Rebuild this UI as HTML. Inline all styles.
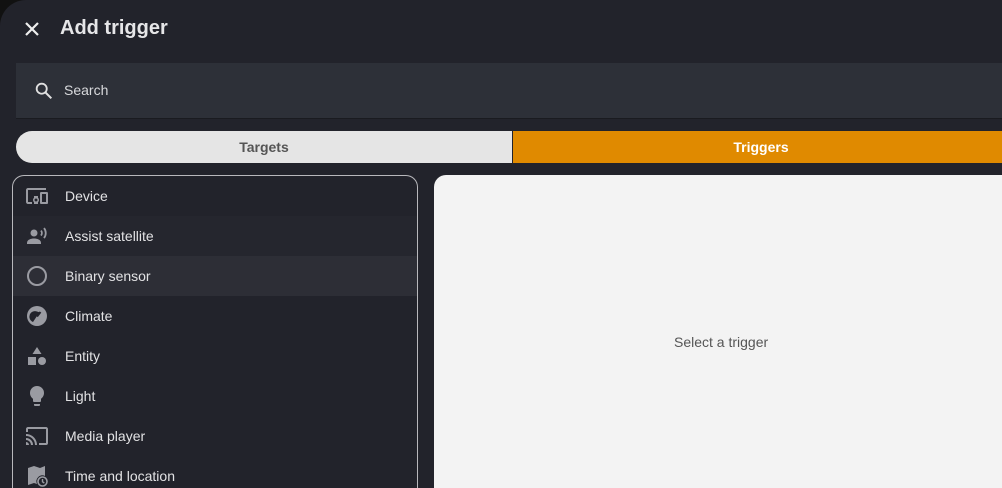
<!DOCTYPE html>
<html><head><style>
*{box-sizing:border-box;margin:0;padding:0}
html,body{width:1002px;height:488px;overflow:hidden;background:#111;font-family:"Liberation Sans",sans-serif}
.dlg{position:absolute;left:0;top:0;width:1002px;height:488px;background:#22232b;border-radius:26px 0 0 0;overflow:hidden}
.x{position:absolute;left:22px;top:19px}
h1{position:absolute;left:60px;top:17px;font-size:20px;font-weight:bold;color:#e6e6e8}
.search{position:absolute;left:16px;top:63px;width:986px;height:56px;background:#2d3038;border-bottom:1px solid #1a1b20}
.search span{position:absolute;left:48px;top:19px;font-size:14px;color:#d8d9dc}
.tabs{position:absolute;left:16px;top:131px;width:986px;height:32px;border-radius:16px 0 0 16px;overflow:hidden;display:flex}
.tabs div{height:32px;line-height:32px;text-align:center;font-size:14px;font-weight:bold}
.t1{width:496px;background:#e5e5e5;color:#555}
.t2{flex:1;background:#e08a00;color:#fff;border-left:1px solid #22232b;padding-left:7px}
.list{position:absolute;left:12px;top:175px;width:406px;height:313px;border:1px solid #b8b8bc;border-bottom:none;border-radius:12px 12px 0 0;overflow:hidden;background:#22232b}
.row{height:40px;display:flex;align-items:center;color:#e2e2e4;font-size:14px}
.row svg{margin-left:12px;width:24px;height:24px;fill:#9a9ba2;margin-right:16px;flex:none}
.r2{background:#25262e}.r3{background:#2d2e36}
.right{position:absolute;left:434px;top:175px;width:568px;height:313px;background:#f3f3f3;border-radius:12px 0 0 0}
.right span{position:absolute;left:240px;top:159px;font-size:14px;color:#555}
</style></head><body>
<div class="dlg">
<svg class="x" width="20" height="20" viewBox="0 0 20 20"><path d="M4 4L16 16M16 4L4 16" stroke="#eee" stroke-width="2.2"/></svg>
<h1>Add trigger</h1>
<div class="search"><svg style="position:absolute;left:17px;top:17px" width="22" height="22" viewBox="0 0 24 24"><circle cx="9.5" cy="9.5" r="5.5" stroke="#e0e0e0" stroke-width="2" fill="none"/><path d="M13.5 13.5L20 20" stroke="#e0e0e0" stroke-width="2.2"/></svg><span>Search</span></div>
<div class="tabs"><div class="t1">Targets</div><div class="t2">Triggers</div></div>
<div class="list">
<div class="row"><svg viewBox="0 0 24 24"><path d="M3 6H21V4H3C1.9 4 1 4.9 1 6V18C1 19.1 1.9 20 3 20H7V18H3V6M13 12H9V13.78C8.39 14.33 8 15.11 8 16C8 16.89 8.39 17.67 9 18.22V20H13V18.22C13.61 17.67 14 16.88 14 16S13.61 14.33 13 13.78V12M11 17.5C10.17 17.5 9.5 16.83 9.5 16S10.17 14.5 11 14.5 12.5 15.17 12.5 16 11.83 17.5 11 17.5M22 8H16C15.5 8 15 8.5 15 9V19C15 19.5 15.5 20 16 20H22C22.5 20 23 19.5 23 19V9C23 8.5 22.5 8 22 8M21 18H17V10H21V18Z"/></svg>Device</div>
<div class="row r2"><svg viewBox="0 0 24 24"><circle cx="9" cy="9" r="3.5"/><path d="M2 19C2 15.5 6 14.5 9 14.5S16 15.5 16 19V20H2Z"/><path d="M16 6.5A4 4 0 0 1 16 11.5" stroke="#9a9ba2" stroke-width="1.8" fill="none"/><path d="M19 4A8 8 0 0 1 19 14" stroke="#9a9ba2" stroke-width="1.8" fill="none"/></svg>Assist satellite</div>
<div class="row r3"><svg viewBox="0 0 24 24"><circle cx="12" cy="12" r="9" fill="none" stroke="#9a9ba2" stroke-width="2"/></svg>Binary sensor</div>
<div class="row"><svg viewBox="0 0 24 24"><circle cx="12" cy="12" r="10"/><path d="M8 18A5.5 5.5 0 0 1 12 7.5L15 8.5L12 12Z" fill="#22232b"/><path d="M15.5 8L12 12.5" stroke="#22232b" stroke-width="2"/></svg>Climate</div>
<div class="row"><svg viewBox="0 0 24 24"><path d="M12 3L16.5 10H7.5Z"/><rect x="3" y="13" width="8" height="8"/><circle cx="17" cy="17" r="4"/></svg>Entity</div>
<div class="row"><svg viewBox="0 0 24 24"><path d="M12,2A7,7 0 0,0 5,9C5,11.38 6.19,13.47 8,14.74V17A1,1 0 0,0 9,18H15A1,1 0 0,0 16,17V14.74C17.81,13.47 19,11.38 19,9A7,7 0 0,0 12,2M9,21A1,1 0 0,0 10,22H14A1,1 0 0,0 15,21V20H9V21Z"/></svg>Light</div>
<div class="row"><svg viewBox="0 0 24 24"><path d="M1,10V12A9,9 0 0,1 10,21H12C12,14.92 7.07,10 1,10M1,14V16A5,5 0 0,1 6,21H8A7,7 0 0,0 1,14M1,18V21H4A3,3 0 0,0 1,18M21,3H3C1.89,3 1,3.89 1,5V8H3V5H21V19H14V21H21A2,2 0 0,0 23,19V5C23,3.89 22.1,3 21,3Z"/></svg>Media player</div>
<div class="row"><svg viewBox="0 0 24 24"><path d="M3 4L9 2L15 4L20 2V12A6 6 0 0 0 12 20L9 19L3 21Z"/><circle cx="17.5" cy="17.5" r="4.5" fill="none" stroke="#9a9ba2" stroke-width="1.6"/><path d="M17.5 15V17.8L19.3 19" stroke="#9a9ba2" stroke-width="1.4" fill="none"/></svg>Time and location</div>
</div>
<div class="right"><span>Select a trigger</span></div>
</div>
</body></html>
